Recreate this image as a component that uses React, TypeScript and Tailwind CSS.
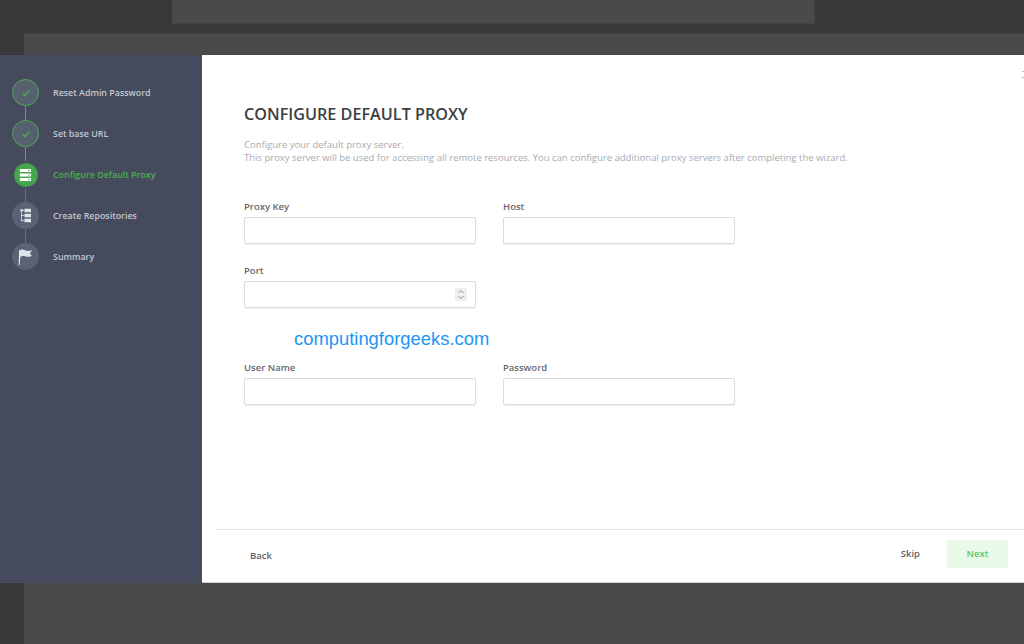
const font = "font-['Open_Sans',sans-serif]";

function CheckIcon() {
  return (
    <svg width="10" height="10" viewBox="0 0 10 10" fill="none" stroke="#4caf50" strokeWidth="1.4">
      <path d="M1.8 5.4 4 7.4 8.2 2.6" />
    </svg>
  );
}

function ServerIcon() {
  return (
    <svg width="13" height="14" viewBox="0 0 14 15">
      <path fill="#fff" d="M1 1h12v3.4H1zM1 5.8h12v3.4H1zM1 10.6h12V14H1z" />
      <path fill="#3f9e48" d="M10 2h1.5v1.2H10zM10 6.9h1.5v1.2H10zM10 11.7h1.5v1.2H10z" />
    </svg>
  );
}

function TreeIcon() {
  return (
    <svg width="11" height="15" viewBox="0 0 11 15" fill="none">
      <path stroke="#dfe2e8" strokeWidth="0.8" d="M1.500 2v11.500M1.500 2.500h3M1.500 7.500h3M1.500 12.500h3" />
      <path fill="#dfe2e8" d="M.5 1h2v2.400h-2zM4.500 .8H11v3.400H4.500zM4.500 5.800H11v3.400H4.500zM4.500 10.800H11v3.400H4.500z" />
    </svg>
  );
}

function FlagIcon() {
  return (
    <svg width="15" height="18" viewBox="0 0 15 18">
      <path fill="#dfe2e8" d="M1 2.500c2.500-1.500 4.500-.8 6.500 0 2 .7 4 .6 6.500-.6-.7 1.600-1.400 2.700-2.200 3.500.6 1 1.300 1.700 2.200 2.300-2.200 1.300-4.300 1.400-6.400.8-2-.6-3.700-.7-5.200.3L1.700 17H.7z" />
    </svg>
  );
}

const steps = [
  { label: "Reset Admin Password", state: "done" },
  { label: "Set base URL", state: "done" },
  { label: "Configure Default Proxy", state: "active" },
  { label: "Create Repositories", state: "todo" },
  { label: "Summary", state: "todo" },
];

function StepCircle({ state, index }: { state: string; index: number }) {
  if (state === "done") {
    return (
      <div className="w-[27px] h-[27px] rounded-full bg-[#56606f] border border-[#4caf50] flex items-center justify-center">
        <CheckIcon />
      </div>
    );
  }
  if (state === "active") {
    return (
      <div className="w-[27px] h-[27px] flex items-center justify-center">
        <div className="w-[24px] h-[24px] rounded-full bg-[radial-gradient(circle,#46a84e_55%,#3a7d4e)] flex items-center justify-center">
          <ServerIcon />
        </div>
      </div>
    );
  }
  return (
    <div className="w-[27px] h-[27px] rounded-full bg-[#596375] flex items-center justify-center">
      {index === 3 ? <TreeIcon /> : <FlagIcon />}
    </div>
  );
}

function Sidebar() {
  return (
    <aside className="w-[202px] shrink-0 bg-[#454a5c] pt-[24px] pl-[12px]">
      {steps.map((step, i) => (
        <div key={step.label} className="relative h-[41px] flex items-start gap-[14px]">
          <StepCircle state={step.state} index={i} />
          <span
            className={`mt-[7px] text-[8.9px] leading-[13px] font-semibold ${
              step.state === "active" ? "text-[#4caf50]" : "text-[#c3c7d1]"
            }`}
          >
            {step.label}
          </span>
          {i < steps.length - 1 && (
            <div
              className={`absolute left-[13px] top-[27px] w-px h-[14px] ${
                i < 2 ? "bg-[#4caf50]" : "bg-[#6a7282]"
              }`}
            />
          )}
        </div>
      ))}
    </aside>
  );
}

function Field({ label, spinner }: { label: string; spinner?: boolean }) {
  return (
    <label className="block w-[232px]">
      <span className="block text-[9.5px] leading-[13px] font-semibold text-[#66686f] mb-[4px]">{label}</span>
      <div className="h-[27px] border border-[#d9dbe0] rounded-[2px] bg-white shadow-[0_1px_1px_#eeeeee] flex items-center justify-end pr-[8px]">
        {spinner && (
          <div className="w-[12px] h-[13px] bg-[#eeeeee] flex items-center justify-center">
            <svg width="8" height="11" viewBox="0 0 8 11" fill="none" stroke="#8a8a8a" strokeWidth="0.9">
              <path d="M1.500 4 4 1.500 6.500 4M1.500 7 4 9.500 6.500 7" />
            </svg>
          </div>
        )}
      </div>
    </label>
  );
}

function ProxyForm() {
  return (
    <main className="relative flex-1 bg-white flex flex-col border-b border-[#cfcfcf]">
      <svg className="absolute right-0 top-[16px]" width="2" height="7" viewBox="0 0 2 7" stroke="#b5b5b5" strokeWidth="1">
        <path d="M0 .5h2M0 6.500h2" />
      </svg>
      <div className="flex-1 pl-[42px] pt-[48px]">
        <h1 className="text-[16.2px] leading-[22px] font-semibold text-[#3c3e42]">CONFIGURE DEFAULT PROXY</h1>
        <p className="mt-[13px] text-[9.5px] leading-[13px] text-[#a9abb2]">
          Configure your default proxy server.
          <br />
          This proxy server will be used for accessing all remote resources. You can configure additional proxy servers after completing the wizard.
        </p>
        <div className="mt-[36px] flex gap-[27px]">
          <Field label="Proxy Key" />
          <Field label="Host" />
        </div>
        <div className="mt-[20px]">
          <Field label="Port" spinner />
        </div>
        <div className="h-[53px] pl-[50px] pt-[18px] font-['Liberation_Sans',sans-serif] text-[18.4px] leading-[26px] text-[#2196f3]">
          computingforgeeks.com
        </div>
        <div className="flex gap-[27px]">
          <Field label="User Name" />
          <Field label="Password" />
        </div>
      </div>
      <footer className="ml-[14px] h-[53px] border-t border-[#e2e2e2] flex items-center justify-between pr-[16px] pl-[34px]">
        <button className="text-[9.5px] font-semibold text-[#5f6166]">Back</button>
        <div className="mb-[4px] flex items-center gap-[27px]">
          <button className="text-[9.5px] font-semibold text-[#5f6166]">Skip</button>
          <button className="w-[61px] h-[28px] bg-[#e9f9e9] text-[9.5px] font-semibold text-[#5fc46a]">Next</button>
        </div>
      </footer>
    </main>
  );
}

export default function App() {
  return (
    <div className={`${font} w-[1024px] h-[644px] overflow-hidden bg-[#383838] flex flex-col`}>
      <div className="ml-[172px] w-[643px] h-[24px] shrink-0 bg-[#4a4a4a] border-r border-b border-[#424242]" />
      <div className="mt-[9px] ml-[24px] h-[22px] shrink-0 bg-[#4a4a4a] border-t border-[#424242]" />
      <div className="h-[528px] shrink-0 flex">
        <Sidebar />
        <ProxyForm />
      </div>
      <div className="ml-[24px] flex-1 bg-[#4a4a4a]" />
    </div>
  );
}
